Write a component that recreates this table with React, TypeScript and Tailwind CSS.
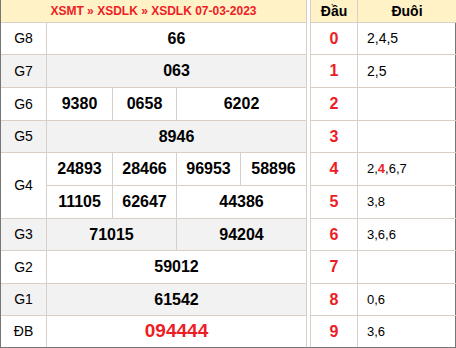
import React from "react";

const B = "border-[#d8d0c6]";

function Cell({
  children,
  className = "",
  style,
}: {
  children?: React.ReactNode;
  className?: string;
  style?: React.CSSProperties;
}) {
  return (
    <div
      className={`flex items-center justify-center border-r border-b ${B} ${className}`}
      style={style}
    >
      {children}
    </div>
  );
}

const num = "text-[16px] font-bold text-black";
const lbl = "text-[14px] text-black";

export default function App() {
  const tails: React.ReactNode[] = [
    "2,4,5",
    "2,5",
    "",
    "",
    <>
      2,<span className="font-bold text-[#ee1c25]">4</span>,6,7
    </>,
    "3,8",
    "3,6,6",
    "",
    "0,6",
    "3,6",
  ];
  return (
    <div
      className="w-[456px] h-[348px] flex border-x border-b border-[#767676] bg-white"
      style={{ fontFamily: '"Liberation Sans", Arial, sans-serif' }}
    >
      {/* left table */}
      <div className="w-[306px] grid grid-cols-[46px_66px_64px_64px_66px] grid-rows-[23px_32px_33px_33px_32px_33px_33px_32px_33px_32px_31px]">
        <Cell className="col-span-5 bg-[#fff2c6] text-[12px] font-bold text-[#ee1c25]">
          XSMT » XSDLK » XSDLK 07-03-2023
        </Cell>

        <Cell className={lbl}>G8</Cell>
        <Cell className={`col-span-4 ${num}`}>66</Cell>

        <Cell className={`bg-[#f2f2f2] ${lbl}`}>G7</Cell>
        <Cell className={`col-span-4 bg-[#f2f2f2] ${num}`}>063</Cell>

        <Cell className={lbl}>G6</Cell>
        <Cell className={num}>9380</Cell>
        <Cell className={num}>0658</Cell>
        <Cell className={`col-span-2 ${num}`}>6202</Cell>

        <Cell className={`bg-[#f2f2f2] ${lbl}`}>G5</Cell>
        <Cell className={`col-span-4 bg-[#f2f2f2] ${num}`}>8946</Cell>

        <Cell className={`row-span-2 ${lbl}`}>G4</Cell>
        <Cell className={num}>24893</Cell>
        <Cell className={num}>28466</Cell>
        <Cell className={num}>96953</Cell>
        <Cell className={num}>58896</Cell>
        <Cell className={num}>11105</Cell>
        <Cell className={num}>62647</Cell>
        <Cell className={`col-span-2 ${num}`}>44386</Cell>

        <Cell className={`bg-[#f2f2f2] ${lbl}`}>G3</Cell>
        <Cell className={`col-span-2 bg-[#f2f2f2] ${num}`}>71015</Cell>
        <Cell className={`col-span-2 bg-[#f2f2f2] ${num}`}>94204</Cell>

        <Cell className={lbl}>G2</Cell>
        <Cell className={`col-span-4 ${num}`}>59012</Cell>

        <Cell className={`bg-[#f2f2f2] ${lbl}`}>G1</Cell>
        <Cell className={`col-span-4 bg-[#f2f2f2] ${num}`}>61542</Cell>

        <Cell className={`border-b-0 ${lbl}`}>ĐB</Cell>
        <Cell className="col-span-4 border-b-0 text-[19px] font-bold text-[#ee1c25]">
          094444
        </Cell>
      </div>

      <div className="w-[3px]" />

      {/* right table */}
      <div
        className={`w-[145px] grid grid-cols-[47px_98px] grid-rows-[23px_32px_33px_33px_32px_33px_33px_32px_33px_32px_31px] border-l ${B}`}
      >
        <Cell className="bg-[#fff2c6] text-[14px] font-bold text-black">Đầu</Cell>
        <Cell className="bg-[#fff2c6] text-[14px] font-bold text-black border-r-0">
          Đuôi
        </Cell>
        {tails.map((t, i) => (
          <React.Fragment key={i}>
            <Cell
              className={`text-[16px] font-bold text-[#ee1c25] ${i === 9 ? "border-b-0" : ""}`}
            >
              {i}
            </Cell>
            <Cell
              className={`justify-start pl-[9px] border-r-0 text-black ${i < 2 ? "text-[14px]" : "text-[13px]"} ${i === 9 ? "border-b-0" : ""}`}
            >
              {t}
            </Cell>
          </React.Fragment>
        ))}
      </div>
    </div>
  );
}
